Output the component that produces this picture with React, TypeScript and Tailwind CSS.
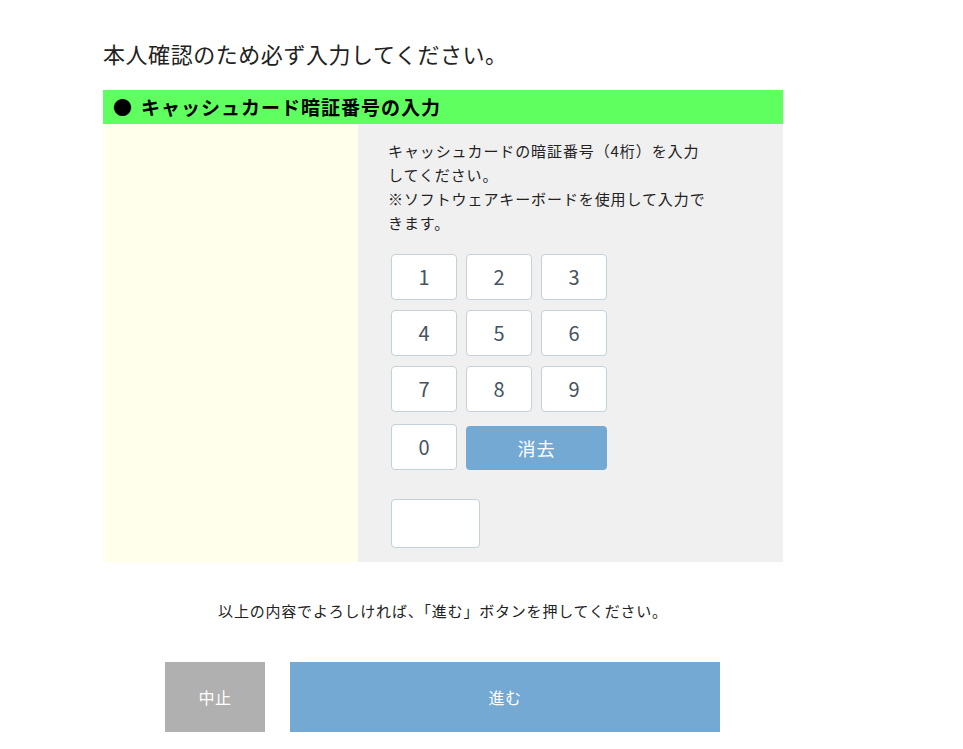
import { useState } from 'react';

const keys = ['1', '2', '3', '4', '5', '6', '7', '8', '9'];

export default function App() {
  const [pin, setPin] = useState('');

  function press(k: string) {
    if (pin.length < 4) setPin(pin + k);
  }

  const keyClass =
    'h-[46px] w-[66px] rounded-[4px] border border-[#c3d1da] bg-white text-[20px] text-[#46535f]';

  return (
    <div className="min-h-screen bg-white font-['Noto_Sans_CJK_JP','Noto_Sans',sans-serif] text-[#222]">
      <div className="ml-[103px] w-[680px] pt-[38px]">
        <h1 className="text-[22px] leading-[30px] font-normal tracking-[0.55px]">
          本人確認のため必ず入力してください。
        </h1>

        <div className="mt-[22px] flex h-[34px] items-center bg-[#5eff5e] pl-[10px] text-[19px] font-bold text-black">
          <span>●</span>
          <span className="ml-[9px] tracking-[1px]">キャッシュカード暗証番号の入力</span>
        </div>

        <div className="flex">
          <div className="w-[255px] bg-[#ffffec]" />
          <div className="flex-1 bg-[#f0f0f0] pt-[15px] pb-[14px] pl-[30px]">
            <p className="text-[15px] leading-[24px] tracking-[0.9px] whitespace-nowrap">
              キャッシュカードの暗証番号（4桁）を入力
              <br />
              してください。
              <br />
              ※ソフトウェアキーボードを使用して入力で
              <br />
              きます。
            </p>

            <div className="mt-[19px] ml-[3px] w-[216px]">
              <div className="grid grid-cols-3 gap-x-[9px] gap-y-[10px]">
                {keys.map((k) => (
                  <button key={k} type="button" onClick={() => press(k)} className={keyClass}>
                    {k}
                  </button>
                ))}
              </div>
              <div className="mt-[12px] flex items-end gap-[9px]">
                <button type="button" onClick={() => press('0')} className={keyClass}>
                  0
                </button>
                <button
                  type="button"
                  onClick={() => setPin('')}
                  className="h-[44px] flex-1 rounded-[4px] bg-[#74a9d4] text-[18px] tracking-[1px] text-white"
                >
                  消去
                </button>
              </div>
              <input
                type="password"
                value={pin}
                readOnly
                className="mt-[29px] block h-[49px] w-[89px] rounded-[4px] border border-[#c3d1da] bg-white px-2 text-[18px]"
              />
            </div>
          </div>
        </div>

        <p className="mt-[39px] text-center text-[15px] leading-[20px] tracking-[0.8px]">
          以上の内容でよろしければ、「進む」ボタンを押してください。
        </p>

        <div className="mt-[41px] ml-[62px] flex gap-[25px] pb-[18px]">
          <button type="button" className="h-[70px] w-[100px] bg-[#b0b0b0] text-[16px] tracking-[0.5px] text-white">
            中止
          </button>
          <button type="button" className="h-[70px] w-[430px] bg-[#74a9d4] text-[16px] tracking-[0.5px] text-white">
            進む
          </button>
        </div>
      </div>
    </div>
  );
}
